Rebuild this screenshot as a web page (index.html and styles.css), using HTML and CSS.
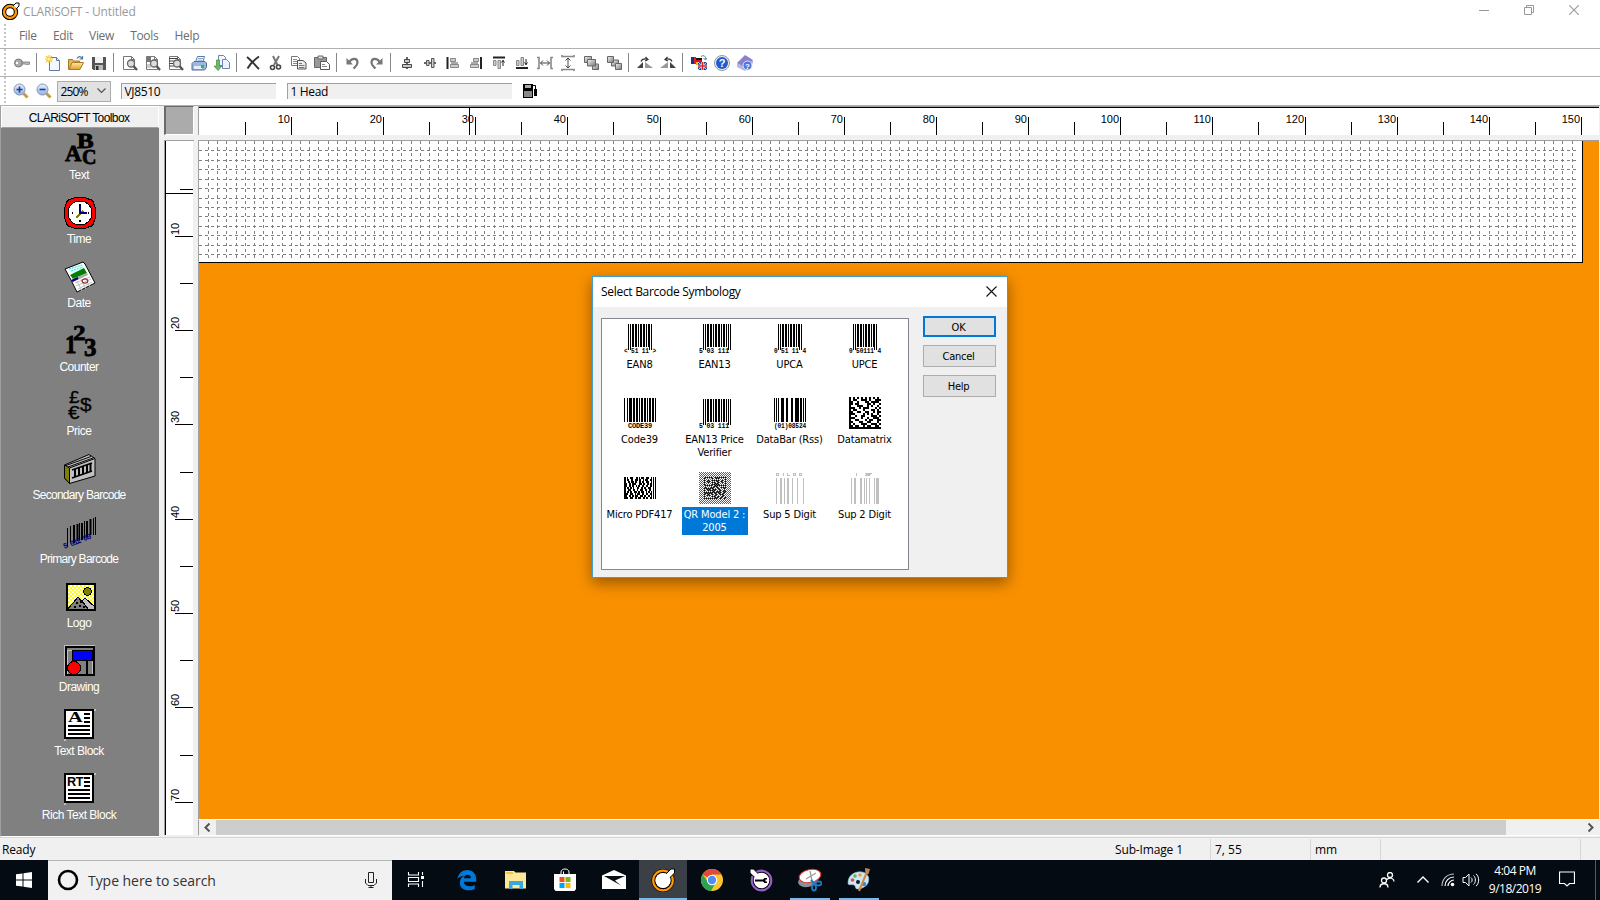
FILE: index.html
```html
<!DOCTYPE html>
<html lang="en">
<head>
<meta charset="utf-8">
<title>CLARiSOFT - Untitled</title>
<link rel="stylesheet" href="styles.css">
</head>
<body>
<svg class="defs" width="0" height="0">
  <defs>
    <linearGradient id="gb" x2="1" y2="1"><stop offset="0" stop-color="#f4f4f4"/><stop offset="1" stop-color="#777"/></linearGradient>
    <linearGradient id="gl" x2="0" y2="1"><stop offset="0" stop-color="#e8f1ff"/><stop offset="1" stop-color="#8fb0e8"/></linearGradient>
    <linearGradient id="gf" x2="0" y2="1"><stop offset="0" stop-color="#ffe9a0"/><stop offset="1" stop-color="#e0a030"/></linearGradient>
    <pattern id="chk" width="4" height="4" patternUnits="userSpaceOnUse"><path fill="#fff" d="M0 0h4v4H0z"/><path fill="#ff0" d="M0 0h2v2H0zM2 2h2v2H2z"/></pattern>
    <pattern id="sel" width="2" height="2" patternUnits="userSpaceOnUse"><path fill="#0078d7" d="M0 0h1v1H0zM1 1h1v1H1z"/></pattern>
    <symbol id="page" viewBox="0 0 16 16"><path d="M1.500 1.500h8l3 3v10h-11z" fill="#fff" stroke="#777"/><path d="M9.500 1.500v3h3" fill="none" stroke="#777"/></symbol>
    <symbol id="lens" viewBox="0 0 16 16"><circle cx="9" cy="8.500" r="3.500" fill="#d8dee0" stroke="#666" stroke-width="1.300"/><path d="M11.500 11l3.500 4" stroke="#555" stroke-width="2.400"/></symbol>
  </defs>
</svg>

<header class="titlebar">
  <svg class="app" width="18" height="18" viewBox="0 0 18 18"><circle cx="8" cy="10" r="6" fill="#fff" stroke="#000" stroke-width="4.400"/><circle cx="8" cy="10" r="6" fill="none" stroke="#f90" stroke-width="2.400"/><path d="M11.500 3.500l2.500-2.500h3v3l-2.500 2.500z" fill="#fff" stroke="#000"/><circle cx="13.500" cy="4.500" r="1.300" fill="#fff"/></svg>
  <span class="title">CLARiSOFT - Untitled</span>
  <div class="winbtns">
    <svg width="10" height="10"><path d="M0 5.500h10" stroke="#999"/></svg>
    <svg width="10" height="10"><path d="M.5 2.500h7v7h-7zM2.500 2.500v-2h7v7h-2" fill="none" stroke="#999"/></svg>
    <svg width="10" height="10"><path d="M0 0l10 10M10 0L0 10" stroke="#999" stroke-width="1.100"/></svg>
  </div>
</header>

<nav class="menubar"><i class="grip"></i><span>File</span><span>Edit</span><span>View</span><span>Tools</span><span>Help</span></nav>

<div class="toolbar"><i class="grip"></i>
  <svg viewBox="0 0 16 16"><circle cx="4.500" cy="8" r="4" fill="#aaa" stroke="#777"/><circle cx="3" cy="8" r="1.200" fill="#fff"/><path d="M8 7h7.500v2l-1 1-1-1-1 1-1-1h-3.500z" fill="#bbb" stroke="#777" stroke-width=".8"/></svg>
  <b></b>
  <svg viewBox="0 0 16 16"><path d="M4.500 2.500h7l3 3v10h-10z" fill="#f4f8ff" stroke="#5d7ba5"/><path d="M11.500 2.500v3h3" fill="#cfe0f8" stroke="#5d7ba5"/><path d="M4 0v8M0 4h8M1 1l6 6M7 1L1 7" stroke="#f5c820" stroke-width="1.200"/><circle cx="4" cy="4" r="1.500" fill="#fff29a"/></svg>
  <svg viewBox="0 0 16 16"><path d="M.5 14.500v-10h4l1 1.500h6v3" fill="#e8b84c" stroke="#a07828"/><path d="M1 14.500l3-7h11.500l-3.500 7z" fill="url(#gf)" stroke="#a87c28"/><path d="M9 3.500c2-3 4-2 5 0M14.500 1v3h-3" fill="none" stroke="#5878a0" stroke-width="1.200"/></svg>
  <svg viewBox="0 0 16 16"><path d="M1 2h14v13H2.500L1 13.500z" fill="#555"/><path d="M4 2h8v6H4z" fill="#f2f2f2"/><path d="M4 10h8v5H4z" fill="#bbb"/><path d="M5 11h2.500v4H5z" fill="#333"/></svg>
  <b></b>
  <svg viewBox="0 0 16 16"><use href="#page"/><use href="#lens"/></svg>
  <svg viewBox="0 0 16 16"><use href="#page"/><path d="M2 2h4v5H2zM7 5h4v5" fill="#777"/><path d="M2 9h4v4H2z" fill="#ccc"/><use href="#lens"/></svg>
  <svg viewBox="0 0 16 16"><use href="#page"/><path d="M1 3.500h9M1 6h9M1 8.500h5M1 11h6" stroke="#444"/><use href="#lens"/></svg>
  <svg viewBox="0 0 16 16"><path d="M4.500 7l2-5.500h7L12 7z" fill="#fff" stroke="#5878a8"/><path d="M7 3.500h5M6.500 5.200h5" stroke="#8aa6cc"/><path d="M1 8.500l2-2h11l1.500 1.500v4.500l-2 2.500H1z" fill="#9db8dc" stroke="#52709c"/><path d="M3 11h8v3H3z" fill="#e6eef8"/><path d="M10 10h3v3h-3z" fill="#1fc81f"/></svg>
  <svg viewBox="0 0 16 16"><path d="M4.500.5h5l2 2v8h-7z" fill="#f5f9ff" stroke="#6b87b0"/><path d="M8.500 4.500h4l3 3v6h-7z" fill="#eef4ff" stroke="#6b87b0"/><path d="M2.500 5h3v6H8l-4 4.500-4-4.500h2.500z" fill="#6cb86c" stroke="#438a43" stroke-width=".7"/></svg>
  <b></b>
  <svg viewBox="0 0 16 16"><path d="M2 2c4 3 8 8 12 12M14 1.500C9 5 5 9 2.500 13.500" stroke="#333" stroke-width="1.900" fill="none"/></svg>
  <svg viewBox="0 0 16 16"><path d="M5 1l4.500 9M11 1L6 10" stroke="#777" stroke-width="2"/><circle cx="4.500" cy="12.500" r="2" fill="none" stroke="#444" stroke-width="1.600"/><circle cx="10.500" cy="12" r="2" fill="none" stroke="#444" stroke-width="1.600"/></svg>
  <svg viewBox="0 0 16 16"><path d="M.5 1.500h6l2 2v7h-8z" fill="#fff" stroke="#777"/><path d="M2 4.500h4M2 6.500h4M2 8.500h4" stroke="#888"/><path d="M6.500 5.500h5.500l3 2.500v6H6.500z" fill="#eee" stroke="#555"/><path d="M8 8.500h3M8 10.500h5.500M8 12.500h5.500" stroke="#777"/></svg>
  <svg viewBox="0 0 16 16"><path d="M.5 2.500h12v10H.5z" fill="#999" stroke="#666"/><path d="M4 1h5v3H4z" fill="#ddd" stroke="#666"/><path d="M6.500 6.500h6l3 3v5h-9z" fill="#fff" stroke="#555"/><path d="M8 9.500h3M8 11.500h5" stroke="#888"/></svg>
  <b></b>
  <svg viewBox="0 0 16 16"><path d="M4 7.500C7 2.500 12.500 3 12.500 7.500c0 3-2 4-4 6" fill="none" stroke="#777" stroke-width="2.200"/><path d="M1.500 3v6.500H8z" fill="#777"/></svg>
  <svg viewBox="0 0 16 16"><path d="M12 7.500C9 2.500 3.500 3 3.500 7.500c0 3 2 4 4 6" fill="none" stroke="#777" stroke-width="2.200"/><path d="M14.500 3v6.500H8z" fill="#777"/></svg>
  <b></b>
  <svg viewBox="0 0 16 16"><path d="M8 2v12" stroke="#333" stroke-width="1.500"/><path d="M5.500 4.500h5v3h-5zM3.500 9.500h9v3h-9z" fill="#ccc" stroke="#444"/></svg>
  <svg viewBox="0 0 16 16"><path d="M2 8h12" stroke="#333" stroke-width="1.500"/><path d="M4.500 5.500h2.500v5H4.500zM9.500 3.500H12v9H9.500z" fill="#ccc" stroke="#555"/></svg>
  <svg viewBox="0 0 16 16"><path d="M2.500 2v12" stroke="#222" stroke-width="2"/><path d="M5.500 3.500h5v3h-5zM5.500 9.500h8v3h-8z" fill="#ccc" stroke="#888"/><path d="M6 8h7" stroke="#555"/></svg>
  <svg viewBox="0 0 16 16"><path d="M13 2v12" stroke="#222" stroke-width="2"/><path d="M5.500 3.500h5v3h-5zM2.500 9.500h8v3h-8z" fill="#ccc" stroke="#888"/><path d="M3 8h7" stroke="#555"/></svg>
  <svg viewBox="0 0 16 16"><path d="M2 2.500h12" stroke="#222" stroke-width="2"/><path d="M2.500 5.500h2.500v5H2.500zM7 5.500h2.500v8H7z" fill="#ccc" stroke="#888"/><path d="M12 5v6M10.500 7.500L12 5.500l1.500 2" fill="none" stroke="#222"/></svg>
  <svg viewBox="0 0 16 16"><path d="M2 13h12" stroke="#222" stroke-width="2"/><path d="M2.500 5.500h2.500v5H2.500zM7 2.500h2.500v8H7z" fill="#ccc" stroke="#888"/><path d="M12 4v6M10.500 7.500L12 9.500l1.500-2" fill="none" stroke="#222"/></svg>
  <svg viewBox="0 0 16 16"><path d="M0 2.500h2v11H0M16 2.500h-2v11h2" fill="none" stroke="#888" stroke-width="1.600"/><path d="M3.500 8h9M6 5.500L3.500 8 6 10.500M10 5.500L12.500 8 10 10.500" fill="none" stroke="#444"/></svg>
  <svg viewBox="0 0 16 16"><path d="M2 0v1.500h12V0M2 16v-1.500h12V16" fill="none" stroke="#888" stroke-width="1.600"/><path d="M8 3v10M5.500 5.500L8 3l2.500 2.500M5.500 10.500L8 13l2.500-2.500" fill="none" stroke="#444"/></svg>
  <svg viewBox="0 0 16 16"><g fill="url(#gb)" stroke="#666"><path d="M1.500 1.500h7v6h-7z"/><path d="M9.500 9h6v5.500h-6z"/><path d="M4.500 4.500h8v6.500h-8z"/></g></svg>
  <svg viewBox="0 0 16 16"><g fill="url(#gb)" stroke="#666"><path d="M5.500 5h7v6h-7z"/><path d="M1.500 1.500h6v6h-6z"/><path d="M9.500 8.500h6v6h-6z"/></g></svg>
  <b></b>
  <svg viewBox="0 0 16 16"><path d="M0 13l6-6v6z" fill="#444"/><path d="M8 13V7l8 6z" fill="#999"/><path d="M4 6.500c1-3 3-3 6-2.500M8.500 2l2.500 2.500L8 6" fill="none" stroke="#333" stroke-width="1.200"/></svg>
  <svg viewBox="0 0 16 16"><path d="M0 13l8-6v6z" fill="#999"/><path d="M10 13V7l6 6z" fill="#444"/><path d="M12 6.500c-1-3-3-3-6-2.500M7.500 2L5 4.500 8 6" fill="none" stroke="#333" stroke-width="1.200"/></svg>
  <b></b>
  <svg viewBox="0 0 16 16"><path d="M0 2h4v7H0z" fill="#1c2f92"/><path d="M3 2h2v7H3z" fill="#d8202c"/><path d="M5 3h6v2H5z" fill="#111"/><path d="M5 5h6v2H5z" fill="#d11"/><path d="M5 7h3v3H5z" fill="#f8b800"/><path d="M7 7h9v8H7z" fill="#203a9c"/><path d="M7 7l9 8M16 7l-9 8" stroke="#fff" stroke-width=".8"/><path d="M11.500 7v8M7 11h9" stroke="#fff" stroke-width="2.400"/><path d="M11.500 7v8M7 11h9" stroke="#d22" stroke-width="1.300"/><path d="M10 1.500c3-2 5 0 4.500 3M12.500 3l2 2 1.500-2" fill="none" stroke="#588"/></svg>
  <svg viewBox="0 0 16 16"><circle cx="8" cy="8" r="7.500" fill="#e8ecf5" stroke="#999"/><circle cx="8" cy="8" r="6" fill="#1f5ad0"/><text x="8" y="12" text-anchor="middle" font-size="11" font-weight="bold" fill="#fff">?</text></svg>
  <svg viewBox="0 0 16 16"><path d="M0 8l8-8 8 5-7 9z" fill="#8a80cf"/><path d="M0 8v4l8 4 8-8V5l-7 8z" fill="#b9b2e6"/><circle cx="10.500" cy="10.500" r="4.500" fill="#4b78dc" stroke="#dde6fa"/><text x="10.500" y="13.500" text-anchor="middle" font-size="8" font-weight="bold" fill="#fff">?</text></svg>
</div>

<div class="toolbar second"><i class="grip"></i>
  <svg viewBox="0 0 16 16"><path d="M10.500 10.500l4 4" stroke="#c99a3a" stroke-width="3"/><circle cx="6.500" cy="6.500" r="5.500" fill="url(#gl)" stroke="#8296b4"/><path d="M6.500 3.500v6M3.500 6.500h6" stroke="#223c80" stroke-width="1.600"/></svg>
  <svg viewBox="0 0 16 16"><path d="M10.500 10.500l4 4" stroke="#c99a3a" stroke-width="3"/><circle cx="6.500" cy="6.500" r="5.500" fill="url(#gl)" stroke="#8296b4"/><path d="M3.500 6.500h6" stroke="#223c80" stroke-width="1.600"/></svg>
  <div class="combo"><span>250%</span><svg viewBox="0 0 9 6"><path d="M.5 .5l4 4 4-4" fill="none" stroke="#555" stroke-width="1.200"/></svg></div>
  <div class="field f1">VJ8510</div>
  <div class="field f2">1 Head</div>
  <svg class="pump" viewBox="0 0 16 16"><path d="M1 1h10v14H1z" fill="#000"/><path d="M3 2h6v3H3z" fill="#aaa"/><path d="M2 8h8v6H2z" fill="#888"/><path d="M10 2.500h3.500V9" fill="none" stroke="#000"/><path d="M12 6h3v7h-3z" fill="#000"/></svg>
</div>

<main class="work">
  <aside class="toolbox">
    <h2>CLARiSOFT Toolbox</h2>
    <ul>
      <li><svg viewBox="0 0 32 32"><g class="serif"><text x="1" y="28" font-size="24" textLength="16" lengthAdjust="spacingAndGlyphs">A</text><text x="13" y="15" font-size="20" textLength="16" lengthAdjust="spacingAndGlyphs">B</text><text x="18" y="31" font-size="21" textLength="14" lengthAdjust="spacingAndGlyphs">C</text></g></svg><span>Text</span></li>
      <li><svg viewBox="0 0 32 32" class="crisp"><path d="M11 0h10l8 3 3 8v10l-3 8-8 3H11l-8-3-3-8V11l3-8z" fill="#000"/><path d="M11 1h10l7 3 3 7v10l-3 7-7 3H11l-7-3-3-7V11l3-7z" fill="#f00"/><circle cx="16" cy="16" r="12" fill="#fff" stroke="#000"/><path d="M16 7v2M16 23v2M8 16h1M24 16h1" stroke="#000" stroke-width="2"/><path d="M12 21l7-7" stroke="#808000" stroke-width="2"/><path d="M16 9v7h7" fill="none" stroke="#000080" stroke-width="2"/></svg><span>Time</span></li>
      <li><svg viewBox="0 0 32 32"><path d="M1 8L19 1l2 2 10 19-18 9-6-12z" fill="#fff" stroke="#000"/><path d="M4 8l15-5 2 4L8 12z" fill="#dff"/><path d="M5 8l13-4M7 10l12-4" stroke="#4dd" stroke-dasharray="2 1"/><path d="M6 14L20 7l3 5-14 6z" fill="#008000"/><path d="M8 18l15-6 1 2-15 7z" fill="#aaa"/><path d="M8 20l6-3" stroke="#000080" stroke-width="2.500"/><path d="M11 22l15-6M12 25l15-7M14 28l14-7M13 20l5 10M17 18l5 10M21 17l5 9" stroke="#c0c0c0"/><ellipse cx="21" cy="20" rx="3" ry="2.200" fill="none" stroke="#800000"/></svg><span>Date</span></li>
      <li><svg viewBox="0 0 32 32"><g class="serif"><text x="1" y="28" font-size="25" textLength="11" lengthAdjust="spacingAndGlyphs">1</text><text x="9" y="15" font-size="22" textLength="12" lengthAdjust="spacingAndGlyphs">2</text><text x="20" y="31" font-size="25" textLength="12" lengthAdjust="spacingAndGlyphs">3</text></g></svg><span>Counter</span></li>
      <li><svg viewBox="0 0 32 32"><g class="money"><text x="5" y="14" font-size="17" textLength="10" lengthAdjust="spacingAndGlyphs">£</text><text x="4" y="30" font-size="18" textLength="11" lengthAdjust="spacingAndGlyphs">€</text><text x="16" y="22" font-size="19" textLength="11" lengthAdjust="spacingAndGlyphs">$</text></g></svg><span>Price</span></li>
      <li><svg viewBox="0 0 32 32"><path d="M.5 12L25 1.500l6 4V23L5.500 30.500.5 25z" fill="#c0c0c0" stroke="#000"/><path d="M.5 12l5 3v15.500L.5 25z" fill="#808000" stroke="#000"/><path d="M5.500 15L31 5.500M2 12.500L27 3.500M4 14L29 5" stroke="#000"/><path d="M8 17l20-7M8 25l20-7" stroke="#000" stroke-width="1.500"/><path d="M11 16v8M15 15v8M19 13v8M23 12v8M26.500 11v7" stroke="#000" stroke-width="2"/></svg><span class="long">Secondary Barcode</span></li>
      <li><svg viewBox="0 0 32 32"><path d="M3.500 11v19M6.500 9v17M15.500 6v17M20.500 4v17M29.500 1v17M31.500 0v18" stroke="#000"/><path d="M10 8v18M13.500 7v17M18 6v17M23 4v16M26.500 2v16" stroke="#000" stroke-width="2"/><text x="0" y="32" font-size="8" class="navy" transform="rotate(-21 0 31)" textLength="29">5 012 00</text></svg><span class="long">Primary Barcode</span></li>
      <li><svg viewBox="0 0 32 32" class="crisp"><path d="M3 3h28v26H3z" fill="url(#chk)"/><path d="M3 29l11-13 11 13z" fill="#808080" stroke="#000"/><path d="M18 20l3-3 10 9v3h-6z" fill="#c0c0c0" stroke="#000"/><circle cx="23.500" cy="10.500" r="3.800" fill="#808000" stroke="#000"/><path d="M12 22h2M16 21h2M10 26h2M15 25h2M19 26h2" stroke="#000" stroke-width="2"/><path d="M3 3h28v26H3z" fill="none" stroke="#000" stroke-width="2"/></svg><span>Logo</span></li>
      <li><svg viewBox="0 0 32 32" class="crisp"><path d="M.5 31V.5H31M3 29V5h22M28 6v23H3" fill="none" stroke="#c0c0c0"/><path d="M2 2h28v28H2zM23 16v13" fill="none" stroke="#000" stroke-width="2"/><path d="M8.500 5.500h20v10h-20z" fill="#00f" stroke="#000"/><circle cx="10" cy="23" r="6.500" fill="#f00" stroke="#000"/></svg><span>Drawing</span></li>
      <li><svg viewBox="0 0 32 32" class="crisp"><path d="M1 1h28v28H1z" fill="#fff" stroke="#000" stroke-width="2"/><text x="4" y="13" font-size="14" font-weight="bold" class="rt" textLength="14" lengthAdjust="spacingAndGlyphs">A</text><path d="M20 5h6M20 9h6M20 13h6M4 17h22M4 21h22M4 25h22" stroke="#000" stroke-width="2"/><path d="M30 0h2v2h-2zM0 30h2v2H0z" fill="#c0c0c0"/></svg><span>Text Block</span></li>
      <li><svg viewBox="0 0 32 32" class="crisp"><path d="M1 1h28v28H1z" fill="#fff" stroke="#000" stroke-width="2"/><text x="3" y="13" font-size="13.500" font-weight="bold" class="sans" textLength="16" lengthAdjust="spacingAndGlyphs">RT</text><path d="M20 5h6M20 9h6M20 13h6M4 17h22M4 21h22M4 25h22" stroke="#000" stroke-width="2"/><path d="M30 0h2v2h-2zM0 30h2v2H0z" fill="#c0c0c0"/></svg><span>Rich Text Block</span></li>
    </ul>
  </aside>
  <div class="vcol">
    <div class="corner"></div>
    <svg id="vruler" width="30" height="696"></svg>
  </div>
  <div class="ccol">
    <svg id="hruler" width="1401" height="29"></svg>
    <div class="canvas"><svg id="grid" width="1385" height="122"></svg></div>
    <div class="scroll">
      <svg width="17" height="15" viewBox="0 0 17 15"><path d="M10.500 3.500l-4 4 4 4" fill="none" stroke="#555" stroke-width="2"/></svg>
      <i></i>
      <svg width="17" height="15" viewBox="0 0 17 15"><path d="M6.500 3.500l4 4-4 4" fill="none" stroke="#555" stroke-width="2"/></svg>
    </div>
  </div>
</main>

<footer class="status"><span class="s0">Ready</span><span class="s1">Sub-Image 1</span><span class="s2">7, 55</span><span class="s3">mm</span><span class="s4"></span><span class="s5"></span></footer>

<div class="taskbar">
  <div class="start"><svg width="16" height="16" viewBox="0 0 16 16"><path d="M0 2.300l6.500-.9v6.100H0zM7.500 1.200L16 0v7.500H7.500zM0 8.500h6.500v6.100L0 13.700zM7.500 8.500H16V16l-8.500-1.200z" fill="#fff"/></svg></div>
  <div class="search">
    <svg width="22" height="22" viewBox="0 0 22 22"><circle cx="11" cy="11" r="9" fill="none" stroke="#000" stroke-width="2.600"/></svg>
    <span>Type here to search</span>
    <svg width="12" height="18" viewBox="0 0 12 18"><path d="M3.500 1.500h5v10h-5zM.5 8v4l2.500 2.500h6l2.500-2.500V8M6 14.500v2M3.500 16.500h5" fill="none" stroke="#222"/></svg>
  </div>
  <div class="slot"><svg viewBox="0 0 24 24"><path d="M4.500 4v3h10V4M4.500 19v-3h10v3M4.500 9.500h10v4h-10zM18.500 4v3M18.500 13v6" fill="none" stroke="#fff" stroke-width="1.100"/><path d="M17 8h3v3h-3z" fill="#fff"/></svg></div>
  <div class="slot edge"><svg viewBox="0 0 24 24"><path d="M1.500 11C2.500 4.500 7 1 12.300 1 18.500 1 22 5.500 22 11v3H8.500c.2 3.600 3.300 4.800 6.500 4.800 2.300 0 4-.5 5.500-1.400v4.300c-2 1-4.200 1.500-6.800 1.500-5.800 0-9.500-3-9.500-8.200 0-3.500 1.800-6 4.700-7.300C4.800 7.500 3 9 1.500 11zm7-.8h7.800c0-2.500-1.500-3.900-3.800-3.900-2.200 0-3.700 1.600-4 3.900z" fill="#0078d7"/></svg></div>
  <div class="slot"><svg viewBox="0 0 24 24"><path d="M1 3h9l1.500 1.500H22v16H1z" fill="#ffe79a"/><path d="M2 4h7v2H2z" fill="#f0c43c"/><path d="M5 21v-8h14v8h-3.500v-4h-7v4z" fill="#38a9e0"/></svg></div>
  <div class="slot"><svg viewBox="0 0 24 24"><path d="M1 6h22v15l-1.500 2h-19L1 21z" fill="#fff"/><path d="M8 9V4c0-4 8-4 8 0v5M10.500 6V3.500" fill="none" stroke="#fff"/><path d="M6.500 9h5v5h-5z" fill="#f25022"/><path d="M12.500 9h5v5h-5z" fill="#7fba00"/><path d="M6.500 15h5v5h-5z" fill="#00a4ef"/><path d="M12.500 15h5v5h-5z" fill="#ffb900"/></svg></div>
  <div class="slot"><svg viewBox="0 0 24 24"><path d="M0 7.500L12 2l12 5.500V21H0z" fill="#fff"/><path d="M2 8h21l-10 4.500 6 5z" fill="#0a0e15"/></svg></div>
  <div class="slot active"><svg viewBox="0 0 24 24"><circle cx="12" cy="12.500" r="9.400" fill="#fff" stroke="#000" stroke-width="4.200"/><circle cx="12" cy="12.500" r="9.800" fill="none" stroke="#f90" stroke-width="2.200"/><path d="M15 6l5-5h3.500v4l-5 5z" fill="#fff" stroke="#000"/><circle cx="12" cy="12.500" r="7.600" fill="#fff"/></svg></div>
  <div class="slot"><svg viewBox="0 0 24 24"><circle cx="12" cy="12" r="11" fill="#fbc52d"/><path d="M12 12L2.500 6.500A11 11 0 0 1 21.500 6.500H12z" fill="#dd4b3e"/><path d="M2.500 6.500A11 11 0 0 0 11 23l5-9-8 0z" fill="#2da352"/><circle cx="12" cy="12" r="5.200" fill="#fff"/><circle cx="12" cy="12" r="4.200" fill="#4f8df5"/></svg></div>
  <div class="slot"><svg viewBox="0 0 24 24"><circle cx="12.500" cy="12.500" r="9.400" fill="#fff" stroke="#000" stroke-width="4.200"/><circle cx="12.500" cy="12.500" r="9.800" fill="none" stroke="#9361c9" stroke-width="2.200"/><path d="M1 1h3.500l5 5-3 4L1 5z" fill="#fff" stroke="#000"/><circle cx="12.500" cy="12.500" r="7.800" fill="#fff"/><path d="M6 11.500h8l1.500-1.500h2.500v1.500h-1.500v2H18V15h-2.500L14 13.500H6z"/></svg></div>
  <div class="slot run"><svg viewBox="0 0 24 24"><ellipse cx="10" cy="13" rx="10" ry="6" fill="#8b9197" transform="rotate(-12 10 13)"/><ellipse cx="12" cy="8" rx="11" ry="6.500" fill="#fff" stroke="#d33" transform="rotate(-12 12 8)"/><path d="M12 3l2 10M18 5l-10 6" stroke="#999" stroke-width="1.300"/><ellipse cx="16" cy="19.500" rx="2" ry="3" fill="none" stroke="#1d7ac2" stroke-width="1.800"/><ellipse cx="20.500" cy="15.500" rx="3" ry="2" fill="none" stroke="#1d7ac2" stroke-width="1.800"/><path d="M13 12l4 4.500" stroke="#1d7ac2" stroke-width="2"/></svg></div>
  <div class="slot run"><svg viewBox="0 0 24 24"><path d="M1 15C1 7 8 3 15 4c6 1 8 6 6 11-2 4-7 6-11 6-2 0-1-3-3-4s-6 1-6-2z" fill="#cfe6f5" stroke="#8ab8d8" stroke-width=".6"/><circle cx="5.500" cy="12" r="1.800" fill="#e05040"/><circle cx="8" cy="8" r="1.800" fill="#58b858"/><circle cx="13" cy="7" r="1.800" fill="#f0a030"/><circle cx="11" cy="14" r="2" fill="#111b28"/><circle cx="17" cy="16" r="2.200" fill="#3a8ad0"/><path d="M12 23L20 4" stroke="#d08a3a" stroke-width="2"/><path d="M18 0l5 1-1.500 5h-3z" fill="#b98a5a"/></svg></div>
  <div class="tray">
    <svg class="people" viewBox="0 0 16 16"><g fill="none" stroke="#fff" stroke-width="1.300"><circle cx="5" cy="8.500" r="2.500"/><path d="M1 15.500c0-5 8-5 8 0"/><circle cx="11" cy="3" r="2.500"/><path d="M8 7.500c3-3 7-1 7 2"/></g></svg>
    <svg class="chev" viewBox="0 0 12 7"><path d="M.5 6.500L6 1l5.500 5.500" fill="none" stroke="#fff" stroke-width="1.400"/></svg>
    <svg class="wifi" viewBox="0 0 14 14"><g fill="none" stroke="#bbb" stroke-width="1.200"><path d="M1 13C1 6 6 1 13 1"/><path d="M4 13c0-5 4-9 9-9" stroke="#fff"/><path d="M7 13c0-3 3-6 6-6" stroke="#fff"/></g><circle cx="11.500" cy="11.500" r="1.800" fill="#fff"/></svg>
    <svg class="vol" viewBox="0 0 18 14"><path d="M1 4.500h2.500L7 1v12L3.500 9.500H1z" fill="none" stroke="#fff"/><path d="M9 4.500c1.500 1 1.500 4 0 5M11.500 2.500c2.500 2 2.500 7 0 9M14 .8c3.500 3 3.500 9.400 0 12.400" fill="none" stroke="#fff"/></svg>
    <div class="clock"><div>4:04 PM</div><div>9/18/2019</div></div>
    <svg class="note" viewBox="0 0 16 17"><path d="M.5 1h15v11.500h-5L8 15l-2.500-2.500h-5z" fill="none" stroke="#fff" stroke-width="1.200"/></svg>
    <i></i>
  </div>
</div>

<section class="dialog">
  <header><span>Select Barcode Symbology</span><svg width="11" height="11"><path d="M.5 .5l10 10M10.500 .5l-10 10" stroke="#111" stroke-width="1.100"/></svg></header>
  <div class="dbody">
    <div class="list" id="list"></div>
    <div class="btns"><button class="ok">OK</button><button>Cancel</button><button>Help</button></div>
  </div>
</section>
<script src="app.js"></script>
</body>
</html>
```
FILE: styles.css
```css
* { box-sizing: border-box; }
body { margin: 0; width: 1600px; height: 900px; overflow: hidden; position: relative; display: flex; flex-direction: column; background: #fff; font: 12px "Open Sans", "Noto Sans", sans-serif; color: #000; }
svg { display: block; flex: none; }
.defs { position: absolute; }
.crisp, #grid, #hruler, #vruler { shape-rendering: crispEdges; }
.titlebar { height: 24px; display: flex; align-items: center; padding: 0 19px 4px 2px; color: #999; }
.title { margin-left: 3px; padding-top: 4px; letter-spacing: -.14px; line-height: 16px; }
.titlebar .app { margin-top: 1px; }
.winbtns { margin-left: auto; display: flex; gap: 35px; margin-right: 2px; }
.grip { width: 2px; align-self: stretch; margin: 0 12px 0 4px; background: repeating-linear-gradient(#c4c4c4 0 2px, #fff 2px 4px); flex: none; }
.menubar { height: 25px; display: flex; align-items: center; border-bottom: 1px solid #b0b0b0; color: #6d6d6d; font-size: 12px; }
.menubar span { margin-right: 16.300px; letter-spacing: -.35px; }
.menubar span:first-of-type { margin-left: 1px; }
.toolbar { height: 29px; display: flex; align-items: center; border-bottom: 1px solid #b0b0b0; }
.toolbar > svg { width: 16px; height: 16px; margin: 0 3.500px; }
.toolbar .grip { margin-right: 4px; }
.toolbar b { width: 1px; height: 19px; margin: 0 4px 0 3px; background: #888; }
.toolbar text { font-family: "Liberation Sans", sans-serif; }
.second > svg:first-of-type { margin-left: 3px; }
.combo { width: 54px; height: 21px; margin-left: 1px; border: 1px solid #adadad; background: #e1e1e1; display: flex; align-items: center; justify-content: space-between; padding: 0 4px 0 3px; letter-spacing: -.9px; }
.combo svg { width: 9px; height: 6px; }
.field { height: 16px; background: #f0f0f0; border: 1px solid #a0a0a0; border-right: 0; border-bottom: 0; padding-left: 3px; line-height: 15px; letter-spacing: -.35px; }
.f1 { width: 155px; margin-left: 10px; }
.f2 { width: 225px; margin: 0 6px 0 11px; letter-spacing: -.35px; }
.second .pump { margin-left: 4px; }
.work { height: 731px; display: flex; background: #f0f0f0; }
.toolbox { width: 159px; background: #808080; border-left: 1px solid #a0a0a0; border-bottom: 1px solid #fff; margin-right: 5px; }
.toolbox h2 { margin: 0; height: 22px; border: 1px solid #fff; border-bottom-color: #a0a0a0; background: #f0f0f0; font: 12px/21px "Liberation Sans", sans-serif; text-align: center; letter-spacing: -.6px; padding: 1px 2px 0 0; }
.toolbox ul { list-style: none; margin: 0; padding: 5px 2px 0 0; color: #fff; font: 12px/14px "Liberation Sans", sans-serif; }
.toolbox li { height: 64px; display: flex; flex-direction: column; align-items: center; letter-spacing: -.5px; }
.toolbox .long { letter-spacing: -.72px; }
.toolbox li svg { width: 32px; height: 32px; margin: 0 0 3px 2px; overflow: visible; }
.serif { font-family: "Liberation Serif", serif; font-weight: bold; stroke: #000; stroke-width: .8px; }
.money { font-family: "Liberation Sans", sans-serif; stroke: #000; stroke-width: .3px; }
.navy { fill: #000080; font-family: "Liberation Mono", monospace; font-weight: bold; }
.rt { font-family: "Liberation Serif", serif; }
.sans { font-family: "Liberation Sans", sans-serif; }
.vcol { width: 30px; margin-right: 4px; display: flex; flex-direction: column; gap: 5px; }
.corner { height: 29px; background: #ababab; border: 2px solid; border-color: #696969 #fff #fff #696969; border-width: 1px 1px 1px 2px; }
.ccol { width: 1401px; display: flex; flex-direction: column; }
#hruler { margin-bottom: 5px; }
#hruler, #vruler { font: 11px "Liberation Sans", sans-serif; }
.canvas { height: 679px; background: #f99000; border-top: 1px solid #a0a0a0; border-left: 1px solid #a0a0a0; }
.scroll { height: 17px; display: flex; align-items: center; background: #f0f0f0; border-left: 1px solid #a0a0a0; border-top: 1px solid #fff; border-bottom: 1px solid #fff; }
.scroll i { width: 1290px; height: 15px; background: #cdcdcd; margin-right: 76px; }
.status { height: 23px; background: #f0f0f0; border-top: 1px solid #d7d7d7; display: flex; align-items: center; line-height: 22px; letter-spacing: -.15px; }
.status span { height: 21px; padding-left: 4px; border-right: 1px solid #d7d7d7; }
.status .s0 { width: 1111px; border: 0; padding-left: 2px; }
.status .s1 { width: 100px; }
.status .s2, .status .s3 { letter-spacing: 0; }
.status .s2 { width: 100px; }
.status .s3 { width: 70px; }
.status .s4 { width: 200px; }
.status .s5 { border: 0; }
.taskbar { height: 40px; background: #050b13; display: flex; color: #fff; }
.start { width: 48px; display: grid; place-items: center; }
.search { width: 344px; background: #f1f1f1; border-top: 1px solid #b4b4b4; color: #333; font-size: 14px; display: flex; align-items: center; padding: 0 15px 0 9px; letter-spacing: -.05px; }
.search span { flex: 1; margin-left: 9px; }
.slot { width: 48px; margin-right: 1px; display: grid; place-items: center; border-bottom: 2px solid transparent; padding-top: 2px; }
.slot:nth-child(3) { margin-right: 3px; }
.slot svg { width: 24px; height: 24px; }
.slot.edge svg { width: 22px; }
.active { background: #3b4046; border-color: #76b9ed; }
.run { background: linear-gradient(#76b9ed, #76b9ed) center bottom / 40px 2px no-repeat border-box; }
.tray { margin-left: auto; display: flex; align-items: center; }
.people { width: 16px; height: 16px; margin-right: 22px; }
.chev { width: 12px; height: 7px; margin-right: 12px; }
.wifi { width: 14px; height: 14px; margin-right: 7px; }
.vol { width: 18px; height: 14px; margin-right: 6px; }
.clock { width: 58px; text-align: center; font-size: 12px; line-height: 18px; letter-spacing: -.5px; white-space: nowrap; }
.note { width: 16px; height: 17px; margin: 0 20px 0 15px; }
.tray i { width: 1px; height: 40px; background: #555b63; margin-right: 4px; }
.dialog { position: absolute; left: 592px; top: 276px; width: 416px; height: 302px; background: #f0f0f0; border: 1px solid #3c9fd8; box-shadow: 0 5px 14px rgba(0,0,0,.4); }
.dialog header { height: 30px; background: #fff; display: flex; align-items: center; justify-content: space-between; padding: 0 10px 2px 8px; letter-spacing: -.3px; }
.dbody { display: flex; padding: 11px 8px; justify-content: flex-start; }
.list { width: 308px; height: 252px; background: #fff; border: 1px solid #828790; display: grid; grid-template-columns: repeat(4, 75px); grid-auto-rows: 75px; padding-top: 3px; }
.item { display: flex; flex-direction: column; align-items: center; font: 11px/13px "DejaVu Sans Condensed", "DejaVu Sans", sans-serif; text-align: center; letter-spacing: -.16px; white-space: nowrap; }
.item svg { width: 32px; height: 32px; shape-rendering: crispEdges; margin-left: 1px; margin-bottom: 3px; overflow: visible; }
.item text { font: bold 7px "Liberation Mono", monospace; }
.item span { padding: 1px 2px; white-space: pre; }
.item.on span { background: #0078d7; color: #fff; width: 66px; }
.btns { display: flex; flex-direction: column; gap: 8px; margin: -2px 0 0 14px; }
.btns button { width: 73px; height: 22px; padding: 1px 2px 0 0; background: #e1e1e1; border: 1px solid #adadad; font: 11px/13px "DejaVu Sans Condensed", "DejaVu Sans", sans-serif; letter-spacing: -.25px; color: #000; }
.btns .ok { border: 2px solid #0078d7; height: 21px; }
```
FILE: app.js
```js
const X = 9.2143, Y = 9.4333;

function hruler() {
  let s = '<path fill="#fff" d="M1 1h1400v28H1z"/><path fill="#a0a0a0" d="M0 0h1401v1H0zM0 0h1v29H0z"/><path d="M1 1h1400v1H1z"/>';
  for (let u = 5; u <= 150; u += 5) {
    const x = Math.floor(1.3 + u * X), top = u % 10 ? 16 : 11;
    s += `<path d="M${x} ${top}h1v${29 - top}h-1z"/>`;
    if (u % 10 === 0) s += `<text x="${x - 1}" y="17" text-anchor="end">${u}</text>`;
  }
  return s + '<path d="M271 2h1v27h-1z"/>';
}

function vruler() {
  let s = '<path fill="#fff" d="M1 1h28v694H1z"/><path fill="#a0a0a0" d="M0 0h30v1H0zM0 0h1v695H0z"/><path d="M1 1h1v694H1z"/>';
  for (let u = 5; u <= 70; u += 5) {
    const y = Math.round(1.5 + u * Y), left = u % 10 ? 16 : 11;
    s += `<path d="M${left} ${y}h${29 - left}v1H${left}z"/>`;
    if (u % 10 === 0) s += `<text transform="translate(15 ${y - 1}) rotate(-90)">${u}</text>`;
  }
  return s + '<path d="M2 53h27v1H2z"/>';
}

function grid() {
  let s = '<path fill="#fff" d="M0 0h1383v121H0z"/><g stroke="#808080" stroke-dasharray="3 3">';
  for (let u = 1; u < 150; u++) s += `<path d="M${Math.floor(.2 + u * X) + .5} 0V117"/>`;
  for (let v = 1; v <= 12; v++) s += `<path d="M0 ${Math.round(v * Y) + .5}H1380"/>`;
  return s + '</g><path d="M0 121h1384v1H0zM1383 0h1v122h-1z"/>';
}

// Bit string to one-pixel columns
function bars(bits, x, y, h, color = '#000') {
  return [...bits].map((b, i) => b === '1' ? `<path fill="${color}" d="M${x + i} ${y}h1v${h}h-1z"/>` : '').join('');
}
function matrix(rows, x, y, w, h = w) {
  return rows.map((r, j) => [...r].map((b, i) => b === '1' ? `<path d="M${x + i * w} ${y + j * h}h${w}v${h}h-${w}z"/>` : '').join('')).join('');
}
const digits = (t, x, w) => `<text x="${x}" y="31" textLength="${w}" lengthAdjust="spacingAndGlyphs">${t}</text>`;
const ean = '101011011010110110101101';
const tall = (x, bits) => bars(bits, x, 2, 23) + bars('101', x, 25, 3) + bars('101', x + bits.length - 3, 25, 3);

const dm = ['1010101010101010','1011001110100111','1100100011011110','1101100001101001','1000111001010010','1110010111000101','1011000100011010','1100110011001011','1110000101010010','1001001100011101','1110001001001110','1001100010110011','1100011001100010','1010001110011101','1101100101100110','1111111111111111'];
const pdf = ['11010011100011010111001110010101','11011001100111011001011100110101','11001101110110011011001110010101','11100110111100011101100110110101','11100110110010110011001100110101','11011011010001100110110011100101','11001110011001001110011001100101','11011011001110110111001011010101','11110011100101110011001100110101','11100110110111001110110011010101','11110011100110111001101100110101'];
const qr = ['11111110101111111','10000010010100001','10111010110101101','10111010011101101','10111010100101101','10000010111100001','11111110101111111','00000000110000000','11010111001101011','00101001110110100','10110110101011010','00000001011010111','11111110110110010','10111010011011101','10111010110100110','10000010101101101','11111110110011010'];

const items = [
  ['EAN8', tall(4, ean) + digits('&lt; 51 11 &gt;', 0, 32)],
  ['EAN13', tall(4, ean + '0101') + digits('5 03 111', 0, 30)],
  ['UPCA', tall(4, ean) + digits('0 51 11 4', 0, 32)],
  ['UPCE', tall(4, ean) + digits('0 50111 4', 0, 32)],
  ['Code39', bars('10010111011011010110110101101101', 0, 1, 24) + digits('CODE39', 4, 24)],
  ['EAN13 Price\nVerifier', tall(4, ean + '0101') + digits('5 03 111', 0, 30)],
  ['DataBar (Rss)', bars('10101001110011000110011110110101', 0, 1, 24) + digits('(01)08524', 0, 32)],
  ['Datamatrix', matrix(dm, 0, 0, 2)],
  ['Micro PDF417', matrix(pdf, 0, 5, 1, 2)],
  ['QR Model 2 :\n2005', '<g transform="translate(5 5) scale(1.29)">' + matrix(qr, 0, 0, 1) + '</g><path fill="url(#sel)" d="M0 0h32v32H0z"/>'],
  ['Sup 5 Digit', bars('1000110010011000100001000001', 2, 6, 26, '#c0c0c0') + '<path fill="none" stroke="#c0c0c0" d="M2.500 1.500h2v2h-2zM9.500 1v3M13 1v2h2v1M19.500 1.500h2v2h-2zM25.500 1.500h2v2h-2z"/>'],
  ['Sup 2 Digit', bars('1001100001100101001000010111', 2, 6, 26, '#c0c0c0') + '<path fill="none" stroke="#c0c0c0" d="M7.500 1v3M16 1.500h7M17 2.500h5M16 3.500h5"/>']
];

document.getElementById('hruler').innerHTML = hruler();
document.getElementById('vruler').innerHTML = vruler();
document.getElementById('grid').innerHTML = grid();
document.getElementById('list').innerHTML = items.map(([name, art]) =>
  `<div class="item${name.startsWith('QR') ? ' on' : ''}"><svg viewBox="0 0 32 32">${art}</svg><span>${name}</span></div>`).join('');
```
